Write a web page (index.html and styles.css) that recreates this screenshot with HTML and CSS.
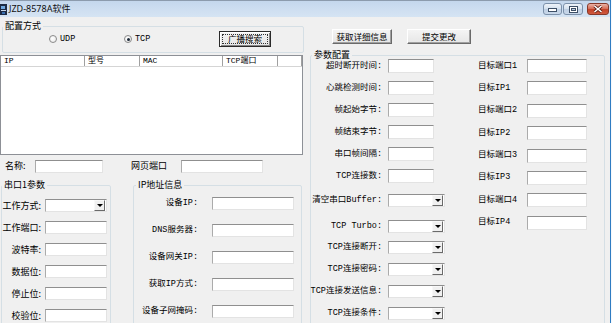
FILE: index.html
```html
<!DOCTYPE html>
<html lang="zh">
<head>
<meta charset="utf-8">
<title>JZD-8578A软件</title>
<link rel="stylesheet" href="styles.css">
</head>
<body>
<div class="window">
  <div class="frame">
    <header class="titlebar">
      <svg class="app-icon" width="7" height="11" viewBox="0 0 7 11">
        <rect x="0" y="0" width="7" height="11" fill="#1d2b44"/>
        <rect x="1" y="2" width="4" height="3" fill="#6fa8e0"/>
        <rect x="1" y="6" width="5" height="1" fill="#c9d8ea"/>
        <rect x="2" y="8" width="3" height="2" fill="#3a6fb0"/>
      </svg>
      <span class="title">JZD-8578A软件</span>
      <div class="controls">
        <div class="ctl ctl-min">
          <svg width="9" height="6" viewBox="0 0 9 6"><rect x="0.5" y="2.5" width="8" height="3" fill="#fff" stroke="#3d4f66"/></svg>
        </div>
        <div class="ctl ctl-max">
          <svg width="9" height="7" viewBox="0 0 9 7"><rect x="0.5" y="0.5" width="8" height="6" fill="none" stroke="#3d4f66"/><rect x="1.5" y="1.5" width="6" height="4" fill="none" stroke="#fff"/><rect x="2.5" y="2.5" width="4" height="2" fill="none" stroke="#3d4f66"/></svg>
        </div>
        <div class="ctl ctl-close">
          <svg width="10" height="8" viewBox="0 0 10 8"><path d="M1.5 1 L8.5 7 M8.5 1 L1.5 7" stroke="#5a1a10" stroke-width="3"/><path d="M1.5 1 L8.5 7 M8.5 1 L1.5 7" stroke="#fff" stroke-width="1.6"/></svg>
        </div>
      </div>
    </header>

    <main class="client">
      <section class="col-left">
        <fieldset class="group group-cfg">
          <legend>配置方式</legend>
          <div class="cfg-row">
            <label class="radio r-udp"><span class="dot"></span><span class="lbl">UDP</span></label>
            <label class="radio r-tcp"><span class="dot checked"></span><span class="lbl">TCP</span></label>
            <button class="btn btn-default"><span class="focus">广播搜索</span></button>
          </div>
        </fieldset>

        <div class="list">
          <div class="list-head">
            <div class="th th-ip">IP</div>
            <div class="th th-model">型号</div>
            <div class="th th-mac">MAC</div>
            <div class="th th-port">TCP端口</div>
            <div class="th th-rest"></div>
          </div>
        </div>

        <div class="name-row">
          <span class="lbl-sans name-label">名称:</span>
          <input class="tb tb-name" type="text">
          <span class="lbl-sans web-label">网页端口</span>
          <input class="tb tb-web" type="text">
        </div>

        <div class="bottom-groups">
          <fieldset class="group group-serial">
            <legend>串口1参数</legend>
            <div class="form-serial">
              <span class="cell-label lbl-sans">工作方式:</span><div class="combo"><span class="arrow"></span></div>
              <span class="cell-label lbl-sans">工作端口:</span><input class="tb" type="text">
              <span class="cell-label lbl-sans">波特率:</span><input class="tb" type="text">
              <span class="cell-label lbl-sans">数据位:</span><input class="tb" type="text">
              <span class="cell-label lbl-sans">停止位:</span><input class="tb" type="text">
              <span class="cell-label lbl-sans">校验位:</span><input class="tb" type="text">
            </div>
          </fieldset>

          <fieldset class="group group-ip">
            <legend>IP地址信息</legend>
            <div class="form-ip">
              <span class="cell-label lbl">设备IP:</span><input class="tb" type="text">
              <span class="cell-label lbl">DNS服务器:</span><input class="tb" type="text">
              <span class="cell-label lbl">设备网关IP:</span><input class="tb" type="text">
              <span class="cell-label lbl">获取IP方式:</span><input class="tb" type="text">
              <span class="cell-label lbl">设备子网掩码:</span><input class="tb" type="text">
            </div>
          </fieldset>
        </div>
      </section>

      <section class="col-right">
        <div class="btn-row">
          <button class="btn btn-detail">获取详细信息</button>
          <button class="btn btn-submit">提交更改</button>
        </div>

        <fieldset class="group group-params">
          <legend>参数配置</legend>
          <div class="params">
            <div class="params-left">
              <div class="prow"><span class="cell-label lbl">超时断开时间:</span><input class="tb tb-s" type="text"></div>
              <div class="prow"><span class="cell-label lbl">心跳检测时间:</span><input class="tb tb-s" type="text"></div>
              <div class="prow"><span class="cell-label lbl">帧起始字节:</span><input class="tb tb-s" type="text"></div>
              <div class="prow"><span class="cell-label lbl">帧结束字节:</span><input class="tb tb-s" type="text"></div>
              <div class="prow"><span class="cell-label lbl">串口帧间隔:</span><input class="tb tb-s" type="text"></div>
              <div class="prow"><span class="cell-label lbl">TCP连接数:</span><input class="tb tb-s" type="text"></div>
              <div class="prow prow-a"><span class="cell-label lbl">清空串口Buffer:</span><div class="combo"><span class="arrow"></span></div></div>
              <div class="prow prow-b"><span class="cell-label lbl">TCP Turbo:</span><div class="combo"><span class="arrow"></span></div></div>
              <div class="prow prow-c"><span class="cell-label lbl">TCP连接断开:</span><div class="combo"><span class="arrow"></span></div></div>
              <div class="prow"><span class="cell-label lbl">TCP连接密码:</span><div class="combo"><span class="arrow"></span></div></div>
              <div class="prow"><span class="cell-label lbl">TCP连接发送信息:</span><div class="combo"><span class="arrow"></span></div></div>
              <div class="prow"><span class="cell-label lbl">TCP连接条件:</span><div class="combo"><span class="arrow"></span></div></div>
            </div>
            <div class="params-right">
              <span class="lbl">目标端口1</span><input class="tb" type="text">
              <span class="lbl">目标IP1</span><input class="tb" type="text">
              <span class="lbl">目标端口2</span><input class="tb" type="text">
              <span class="lbl">目标IP2</span><input class="tb" type="text">
              <span class="lbl">目标端口3</span><input class="tb" type="text">
              <span class="lbl">目标IP3</span><input class="tb" type="text">
              <span class="lbl">目标端口4</span><input class="tb" type="text">
              <span class="lbl">目标IP4</span><input class="tb" type="text">
            </div>
          </div>
        </fieldset>
      </section>
    </main>
  </div>
</div>
</body>
</html>
```

FILE: styles.css
```css
* { box-sizing: border-box; }

body {
  margin: 0;
  background: #f0f0f0;
}

.window {
  width: 612px;
  height: 323px;
  overflow: hidden;
  background: #f0f0f0;
  border-right: 1px solid #f6f8fb;
  font-family: "Noto Sans CJK SC", sans-serif;
  color: #000;
}

.frame {
  height: 100%;
  display: flex;
  flex-direction: column;
  border-right: 1px solid #2f7cc2;
}

/* ---------- title bar ---------- */
.titlebar {
  height: 17px;
  flex: none;
  display: flex;
  align-items: center;
  background: linear-gradient(#c4d7ed, #cfdff1 60%, #d5e4f3);
  border-top: 1px solid #8c9bad;
}

.app-icon { flex: none; }

.title {
  margin-left: 2px;
  font-family: "Noto Sans", "Noto Sans CJK SC", sans-serif;
  font-size: 9px;
  line-height: 12px;
  color: #111;
}

.controls {
  margin-left: auto;
  margin-right: 1px;
  align-self: flex-start;
  margin-top: 2px;
  display: flex;
}

.ctl {
  height: 12px;
  border: 1px solid #7c91aa;
  border-radius: 3px;
  background: linear-gradient(#eef3f9, #d6e2ef 45%, #bfd0e4 55%, #c9d8ea);
  display: flex;
  align-items: center;
  justify-content: center;
}
.ctl-min { width: 19px; }
.ctl-max { width: 20px; margin-left: 1px; }
.ctl-close {
  width: 22px;
  margin-left: 4px;
  border-color: #87392a;
  background: linear-gradient(#eab3a6, #d7705a 45%, #c4432a 55%, #cf5a3f);
}

/* ---------- layout ---------- */
.client {
  flex: 1;
  display: flex;
  min-height: 0;
  overflow: hidden;
}

.col-left {
  width: 307px;
  flex: none;
  display: flex;
  flex-direction: column;
}

.col-right {
  flex: 1;
  display: flex;
  flex-direction: column;
}

.col-left > *,
.col-right > * { flex: none; }

/* ---------- group boxes ---------- */
.group {
  margin: 0;
  padding: 0;
  min-width: 0;
  border: 1px solid #d5dfe5;
  border-radius: 2px;
}

.group > legend {
  padding: 0 2px;
  font-family: "Noto Sans CJK SC", sans-serif;
  font-size: 9px;
  line-height: 10px;
}

.group-cfg {
  margin: 4px 0 0 2px;
  width: 302px;
}

.cfg-row {
  height: 16px;
  margin-bottom: 5px;
  padding-left: 46px;
  display: flex;
  align-items: center;
}

.radio {
  display: flex;
  align-items: center;
  gap: 3px;
}
.r-udp { width: 75px; }
.r-tcp { width: 95px; }

.dot {
  width: 8px;
  height: 8px;
  border-radius: 50%;
  border: 1px solid #8a8a8a;
  background: radial-gradient(circle at 40% 40%, #fff, #e6e6e6);
  display: flex;
  align-items: center;
  justify-content: center;
}
.dot.checked::after {
  content: "";
  width: 3px;
  height: 3px;
  border-radius: 50%;
  background: #1e2a3a;
}

/* ---------- text styles ---------- */
.lbl {
  font-family: "Liberation Mono", "Noto Sans CJK SC", monospace;
  font-size: 8.5px;
  line-height: 11px;
  white-space: nowrap;
}

.lbl-sans {
  font-family: "Noto Sans CJK SC", sans-serif;
  font-size: 9px;
  line-height: 12px;
  white-space: nowrap;
}

.cell-label {
  display: flex;
  justify-content: flex-end;
}

/* ---------- buttons ---------- */
.btn {
  padding: 0;
  margin: 0;
  font-family: "Noto Sans CJK SC", sans-serif;
  font-size: 8.5px;
  line-height: 11px;
  color: #000;
  background: linear-gradient(#f4f4f4, #e6e6e6);
  border: 1px solid;
  border-color: #ffffff #6a6a6a #6a6a6a #ffffff;
  box-shadow: inset -1px -1px #a0a0a0;
}

.btn-default {
  width: 52px;
  height: 16px;
  margin-top: -1px;
  border: 1px solid #2a2a2a;
  box-shadow: inset 1px 1px #fff, inset -1px -1px #858585;
  display: flex;
  padding: 2px;
}
.btn-default .focus {
  flex: 1;
  border: 1px dotted #333;
  display: flex;
  align-items: center;
  justify-content: center;
}

.btn-row {
  margin-top: 12px;
  padding-left: 25px;
  height: 15px;
  display: flex;
  gap: 15px;
}
.btn-detail { width: 60px; }
.btn-submit { width: 64px; }

/* ---------- fields ---------- */
.tb {
  display: block;
  margin: 0;
  padding: 0;
  width: 100%;
  height: 13px;
  background: #fff;
  border: 1px solid;
  border-color: #8f8f8f #e3e3e3 #e3e3e3 #ababab;
  outline: none;
  font: inherit;
}

.combo {
  height: 13px;
  background: #fff;
  border: 1px solid;
  border-color: #8f8f8f #e3e3e3 #e3e3e3 #ababab;
  display: flex;
  justify-content: flex-end;
  padding: 0 1px 0 0;
}

.arrow {
  width: 11px;
  height: 11px;
  background: #f0f0f0;
  border: 1px solid;
  border-color: #f8f8f8 #6a6a6a #6a6a6a #f8f8f8;
  display: flex;
  align-items: center;
  justify-content: center;
}
.arrow::after {
  content: "";
  border-left: 3px solid transparent;
  border-right: 3px solid transparent;
  border-top: 3px solid #000;
}

/* ---------- list view ---------- */
.list {
  margin-top: 2px;
  width: 303px;
  height: 100px;
  background: #fff;
  border: 1px solid #8d9096;
}

.list-head {
  height: 11px;
  display: flex;
  border-bottom: 1px solid #d5d5d5;
}

.th {
  height: 100%;
  border-right: 1px solid #a0a0a0;
  padding-left: 3px;
  font-family: "Liberation Mono", "Noto Sans CJK SC", monospace;
  font-size: 8px;
  line-height: 10px;
  white-space: nowrap;
}
.th-ip { width: 84px; }
.th-model { width: 55px; }
.th-mac { width: 83px; }
.th-port { width: 55px; }
.th-rest { width: 24px; }

/* ---------- name row ---------- */
.name-row {
  margin-top: 4px;
  height: 14px;
  padding-left: 5px;
  display: flex;
  align-items: center;
}
.name-label { width: 30px; }
.tb-name { width: 68px; }
.web-label { width: 50px; margin-left: 28px; }
.tb-web { width: 82px; }

/* ---------- bottom groups ---------- */
.bottom-groups {
  margin-top: 7px;
  display: flex;
  align-items: flex-start;
}

.group-serial {
  margin-left: 1px;
  width: 110px;
  height: 170px;
}
.group-ip {
  margin-left: 22px;
  width: 169px;
  height: 170px;
}
.group-ip > legend { margin-left: 2px; }

.form-serial {
  padding-top: 9px;
  display: grid;
  grid-template-columns: 39px 62px;
  grid-auto-rows: 13px;
  column-gap: 4px;
  row-gap: 9px;
  align-items: center;
}

.form-ip {
  padding-top: 7px;
  display: grid;
  grid-template-columns: 64px 82px;
  grid-auto-rows: 13px;
  column-gap: 14px;
  row-gap: 14px;
  align-items: center;
}

/* ---------- parameter group ---------- */
.group-params {
  margin: 6px 0 0 3px;
  width: 295px;
  height: 300px;
}
.group-params > legend { margin-left: 1px; }

.params {
  margin-top: -1px;
  display: flex;
  align-items: flex-start;
}

.params-left {
  width: 134px;
  display: flex;
  flex-direction: column;
  gap: 8px;
}

.prow {
  height: 14px;
  display: grid;
  grid-template-columns: 71px 57px;
  column-gap: 6px;
  align-items: center;
}
.prow .tb-s { width: 46px; height: 14px; }
.prow-a { margin-top: 2px; }
.prow-b { margin-top: 4px; }
.prow-c { margin-top: -1px; }

.params-right {
  margin-left: 33px;
  display: grid;
  grid-template-columns: 49px 60px;
  grid-auto-rows: 14px;
  row-gap: 8.4px;
  align-items: center;
}
.params-right .tb { height: 14px; }
```
